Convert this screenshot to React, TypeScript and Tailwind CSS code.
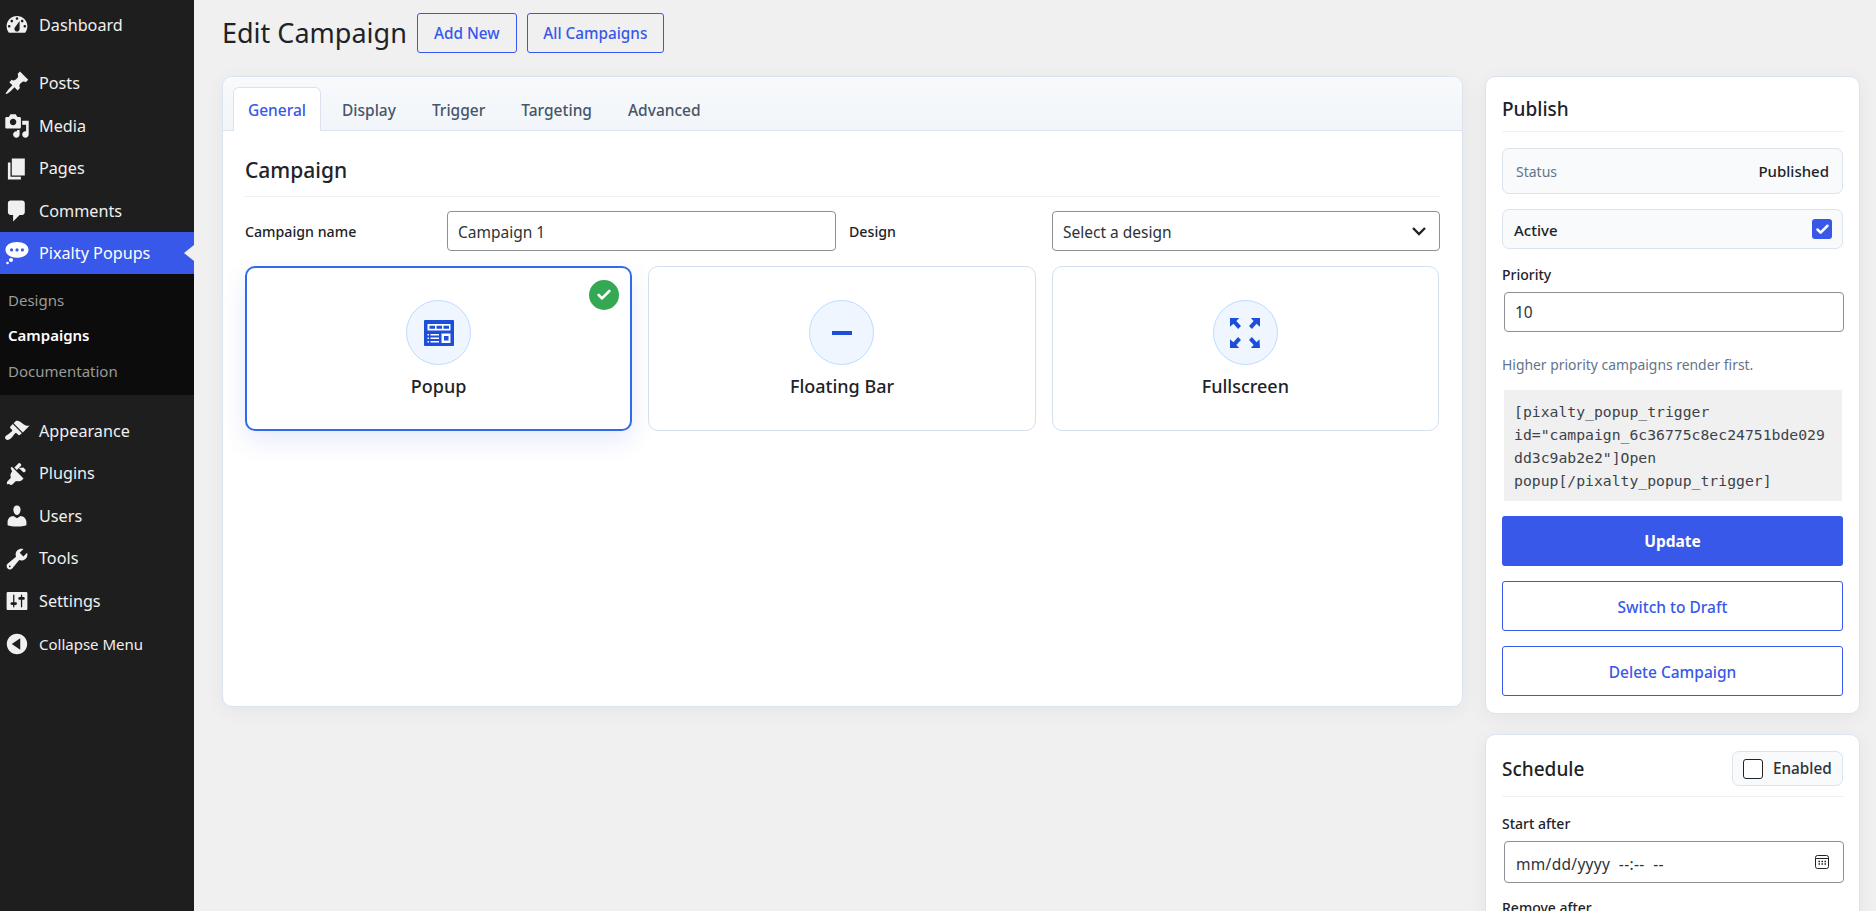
import { Check } from "lucide-react";
import type { ReactNode } from "react";

const ui = "font-['Noto_Sans',sans-serif]";

const Dash = ({ d, className = "" }: { d: string; className?: string }) => (
    <svg viewBox="0 0 20 20" className={`w-[26px] h-[26px] fill-current ${className}`}>
        <path fillRule="evenodd" d={d} />
    </svg>
);

const icons = {
    dashboard:
        "M3.76 16h12.48c1.1-1.37 1.76-3.11 1.76-5 0-4.42-3.58-8-8-8s-8 3.58-8 8c0 1.89.66 3.63 1.76 5zM10 4c.55 0 1 .45 1 1s-.45 1-1 1-1-.45-1-1 .45-1 1-1zM6 6c.55 0 1 .45 1 1s-.45 1-1 1-1-.45-1-1 .45-1 1-1zm8 0c.55 0 1 .45 1 1s-.45 1-1 1-1-.45-1-1 .45-1 1-1zm-5.37 5.55L12 7v6c0 1.1-.9 2-2 2s-2-.9-2-2c0-.57.24-1.08.63-1.45zM4 10c.55 0 1 .45 1 1s-.45 1-1 1-1-.45-1-1 .45-1 1-1zm12 0c.55 0 1 .45 1 1s-.45 1-1 1-1-.45-1-1 .45-1 1-1z",
    posts: "M10.44 3.02l1.82-1.82 6.36 6.35-1.83 1.82c-1.05-.68-2.48-.57-3.41.36l-.75.75c-.92.93-1.04 2.35-.35 3.41l-1.83 1.82-2.41-2.41-2.8 2.79c-.42.42-3.38 2.71-3.8 2.29s1.86-3.39 2.28-3.81l2.79-2.79L4.1 9.36l1.83-1.82c1.05.69 2.48.57 3.4-.36l.75-.75c.93-.92 1.05-2.35.36-3.41z",
    media: "M13 11V4c0-.55-.45-1-1-1h-1.67L9 1H5L3.67 3H2c-.55 0-1 .45-1 1v7c0 .55.45 1 1 1h10c.55 0 1-.45 1-1zM7 4.5c1.38 0 2.5 1.12 2.5 2.5S8.38 9.5 7 9.5 4.5 8.38 4.5 7 5.62 4.5 7 4.5zM14 6h5v10.5c0 1.38-1.12 2.5-2.5 2.5S14 17.88 14 16.5s1.12-2.5 2.5-2.5c.17 0 .34.02.5.05V9h-3V6zm-4 8.05V13h2v3.5c0 1.38-1.12 2.5-2.5 2.5S7 17.88 7 16.5 8.12 14 9.5 14c.17 0 .34.02.5.05z",
    pages: "M6 15V2h10v13H6zm-1 1h8v2H3V5h2v11z",
    comments:
        "M5 2h9c1.1 0 2 .9 2 2v7c0 1.1-.9 2-2 2h-2l-5 5v-5H5c-1.1 0-2-.9-2-2V4c0-1.1.9-2 2-2z",
    appearance:
        "M14.48 11.06L7.41 3.99l1.5-1.5c.5-.56 2.3-.47 3.51.32 1.21.8 1.43 1.28 2.91 2.1 1.18.64 2.45 1.26 4.45.85zm-.71.71L6.7 4.7 4.93 6.47c-.39.39-.39 1.02 0 1.41l1.06 1.06c.39.39.39 1.03 0 1.42-.6.6-1.43 1.11-2.21 1.69-.35.26-.7.53-1.01.84C1.43 13.23 0 15 1.41 16.41s3.14-.02 4.49-1.36c.31-.31.58-.66.84-1.01.59-.78 1.1-1.61 1.7-2.21.39-.39 1.02-.39 1.41 0l1.06 1.06c.39.39 1.02.39 1.41 0z",
    plugins:
        "M13.11 4.36L9.87 7.6 8 5.73l3.24-3.24c.35-.34 1.05-.2 1.56.32.52.51.66 1.21.31 1.55zm-8 1.77l.91-.91 9.01 9.01-.91.91c-1.37 1.37-3.24 1.62-4.94.93l-2.96 2.96-1.31.2-.78-.78-1.97.2.2-1.97 2.96-2.96c-.69-1.7-.44-3.57.93-4.94zm9.82-.3l1.62 1.62c.34.35.2 1.05-.31 1.56-.52.52-1.22.66-1.56.31l-3.24-3.24 3.49-.25z",
    users: "M10 9.25c-2.27 0-2.73-3.44-2.73-3.44C7 4.02 7.82 2 9.97 2c2.16 0 2.98 2.02 2.71 3.81 0 0-.41 3.44-2.68 3.44zm0 2.57L12.72 10c2.39 0 4.52 2.33 4.52 4.53v2.49s-3.65 1.13-7.24 1.13c-3.65 0-7.24-1.13-7.24-1.13v-2.49c0-2.25 1.94-4.48 4.47-4.48z",
    tools: "M16.68 9.77c-1.34 1.34-3.3 1.67-4.95.99l-5.41 6.52c-.99.99-2.59.99-3.57 0-.99-.98-.99-2.58 0-3.57l6.52-5.42c-.68-1.65-.35-3.61.99-4.95 1.28-1.28 3.12-1.62 4.72-1.06l-2.89 2.89 2.82 2.82 2.86-2.87c.53 1.58.18 3.41-1.09 4.67zM4.93 16.15c.27-.27.27-.71 0-.98-.27-.27-.71-.27-.98 0-.27.27-.27.71 0 .98.27.27.71.27.98 0z",
    settings:
        "M18 16V4c0-.55-.45-1-1-1H3c-.55 0-1 .45-1 1v12c0 .55.45 1 1 1h14c.55 0 1-.45 1-1zM8 11h1c.55 0 1 .45 1 1s-.45 1-1 1H8v1.5c0 .28-.22.5-.5.5s-.5-.22-.5-.5V13H6c-.55 0-1-.45-1-1s.45-1 1-1h1V5.5c0-.28.22-.5.5-.5s.5.22.5.5V11zm5-2h-1c-.55 0-1-.45-1-1s.45-1 1-1h1V5.5c0-.28.22-.5.5-.5s.5.22.5.5V7h1c.55 0 1 .45 1 1s-.45 1-1 1h-1v5.5c0 .28-.22.5-.5.5s-.5-.22-.5-.5V9z",
    collapse:
        "M10 2.16c4.33 0 7.84 3.51 7.84 7.84s-3.51 7.84-7.84 7.84S2.16 14.33 2.16 10 5.67 2.16 10 2.16zM12.5 14.5v-9L6 10z",
};

const MenuItem = ({ icon, label }: { icon: string; label: string }) => (
    <div className="flex items-center h-[42.6px] text-[#f0f0f0]">
        <Dash d={icon} className="ml-[4px] mr-[9px] shrink-0" />
        <span className="text-[16.2px]">{label}</span>
    </div>
);

const BubbleIcon = () => (
    <svg viewBox="0 0 24 24" className="w-6 h-6 ml-[5px] mr-[10px] shrink-0">
        <path
            fill="#fff"
            fillRule="evenodd"
            d="M12 1c6.4 0 11.5 2.9 11.5 7.8S18.4 16.8 12 16.8 .5 13.7 .5 8.8 5.6 1 12 1zM6.6 7.3a1.6 1.6 0 1 0 0 3.2 1.6 1.6 0 0 0 0-3.2zm5.4 0a1.6 1.6 0 1 0 0 3.2 1.6 1.6 0 0 0 0-3.2zm5.4 0a1.6 1.6 0 1 0 0 3.2 1.6 1.6 0 0 0 0-3.2z"
        />
        <circle cx="6" cy="19" r="2" fill="#fff" />
        <circle cx="2.5" cy="22" r="1.3" fill="#fff" />
    </svg>
);

const Sidebar = () => (
    <aside className="w-[194px] shrink-0 bg-[#1e1e1e] pt-[4px]">
        <MenuItem icon={icons.dashboard} label="Dashboard" />
        <div className="h-[15.5px]" />
        <MenuItem icon={icons.posts} label="Posts" />
        <MenuItem icon={icons.media} label="Media" />
        <MenuItem icon={icons.pages} label="Pages" />
        <MenuItem icon={icons.comments} label="Comments" />
        <div className="relative flex items-center h-[42px] bg-[#3858e9] text-white">
            <BubbleIcon />
            <span className="text-[16.2px]">Pixalty Popups</span>
            <span className="absolute right-0 top-[13px] border-y-[8px] border-r-[10px] border-y-transparent border-r-[#f0f0f0]" />
        </div>
        <div className="bg-[#0c0c0c] h-[121px] pt-[8px] text-[15px]">
            <div className="h-[35.5px] flex items-center pl-[8px] text-[#9a9a9a]">Designs</div>
            <div className="h-[35.5px] flex items-center pl-[8px] text-white font-semibold">Campaigns</div>
            <div className="h-[35.5px] flex items-center pl-[8px] text-[#9a9a9a]">Documentation</div>
        </div>
        <div className="h-[14px]" />
        <MenuItem icon={icons.appearance} label="Appearance" />
        <MenuItem icon={icons.plugins} label="Plugins" />
        <MenuItem icon={icons.users} label="Users" />
        <MenuItem icon={icons.tools} label="Tools" />
        <MenuItem icon={icons.settings} label="Settings" />
        <div className="flex items-center h-[44px] text-[#f0f0f0]">
            <Dash d={icons.collapse} className="ml-[4px] mr-[9px] shrink-0" />
            <span className="text-[15px]">Collapse Menu</span>
        </div>
    </aside>
);

const HeaderButton = ({ children, className }: { children: ReactNode; className: string }) => (
    <button className={`h-10 rounded-[3px] border border-[#3858e9] bg-transparent text-[15.3px] font-medium text-[#3858e9] ${className}`}>
        {children}
    </button>
);

const PopupGlyph = () => (
    <svg viewBox="0 0 30 26" className="w-[30px] h-[26px]">
        <rect width="30" height="26" rx="1" fill="#1d4ed8" />
        <path fill="#fff" d="M3.5 4h23v6.5h-23zM17.5 13.5h9V23h-9z" />
        <path fill="#1d4ed8" d="M5.5 5.8H11v3H5.5zM12.5 5.8H18v3h-5.5zM19.5 5.8H25v3h-5.500zM20 16h4.500v4.500H20z" />
        <path fill="#fff" d="M3.5 14H5v1.500H3.500zM6.500 14H15v1.500H6.500zM3.500 17.500H5V19H3.500zM6.500 17.500H15V19H6.500zM3.500 21H5v1.500H3.500zM6.500 21H15v1.500H6.500z" />
    </svg>
);

const FullscreenGlyph = () => (
    <svg viewBox="2 2 26 26" className="w-[30px] h-[30px]" fill="#1d4ed8">
        <path d="M2 2h8l-2.500 2.500 4 4.500-2.500 2.500-4-4.500L2 9.500z" />
        <path d="M28 2h-8l2.500 2.500-4 4.500 2.500 2.500 4-4.500L28 9.500z" />
        <path d="M2 28h8l-2.500-2.500 4-4.500-2.500-2.500-4 4.500L2 20.500z" />
        <path d="M28 28h-8l2.500-2.500-4-4.500 2.500-2.500 4 4.500 2.500-2.500z" />
    </svg>
);

const TypeCard = ({
    label,
    selected,
    children,
}: {
    label: string;
    selected?: boolean;
    children: ReactNode;
}) => (
    <div
        className={`relative h-[165px] rounded-[10px] bg-white flex flex-col items-center ${
            selected
                ? "border-2 border-[#2f6bea] pt-[32px] shadow-[0_10px_24px_rgba(56,88,233,0.12)]"
                : "border border-[#d5e0ee] pt-[33px]"
        }`}
    >
        {selected && (
            <span className="absolute top-[12px] right-[11px] w-[30px] h-[30px] rounded-full bg-[#34a853] flex items-center justify-center text-white">
                <Check size={16} strokeWidth={4} />
            </span>
        )}
        <span className="w-[65px] h-[65px] rounded-full bg-[#eff6ff] border border-[#bfdbfe] flex items-center justify-center">
            {children}
        </span>
        <span className="mt-[9px] text-[18px] font-medium leading-[24px] text-[#1d2327]">{label}</span>
    </div>
);

const tabs = ["Display", "Trigger", "Targeting", "Advanced"];

const cardShadow = "shadow-[0_4px_20px_rgba(15,23,42,0.05)]";

const MainCard = () => (
    <section className={`h-[631px] rounded-[10px] border border-[#dbe3ee] bg-white overflow-hidden ${cardShadow}`}>
        <div className="h-[54px] flex items-end gap-[6px] pl-[10px] border-b border-[#dbe3ee] bg-gradient-to-b from-[#f8fafc] to-[#f1f5f9] text-[15.5px] font-medium text-[#475569]">
            <div className="h-[44px] w-[88px] -mb-px pt-[3px] rounded-t-[6px] border border-b-0 border-[#dbe3ee] bg-white text-[#3858e9] flex items-center justify-center">
                General
            </div>
            {tabs.map((tab) => (
                <div key={tab} className="h-[44px] pt-[5px] px-[15px] flex items-center">
                    {tab}
                </div>
            ))}
        </div>
        <div className="px-[22px]">
            <h2 className="mt-[23px] pb-[10px] text-[21px] font-medium leading-[32px] text-[#1d2327] border-b border-[#eef1f5]">
                Campaign
            </h2>
            <div className="mt-[14px] flex items-center text-[14.2px] font-medium text-[#1d2327]">
                <label className="w-[202px] pt-px shrink-0">Campaign name</label>
                <input
                    readOnly
                    value="Campaign 1"
                    className="w-[389px] h-10 px-[10px] pt-[2px] rounded-[4px] border border-[#8c8f94] bg-white text-[15.5px] font-normal text-[#2c3338]"
                />
                <label className="ml-[13px] w-[203px] pt-px shrink-0">Design</label>
                <div className="relative w-[388px]">
                    <select className="w-full h-10 px-[10px] pt-[3px] rounded-[4px] border border-[#8c8f94] bg-white text-[15.5px] font-normal text-[#2c3338] appearance-none">
                        <option>Select a design</option>
                    </select>
                    <svg viewBox="0 0 20 20" className="absolute right-[9px] top-[8px] w-6 h-6 fill-none stroke-[#1d2327] stroke-2 pointer-events-none">
                        <path d="M5 7.5l5 5 5-5" />
                    </svg>
                </div>
            </div>
            <div className="mt-[15px] mr-px grid grid-cols-3 gap-4">
                <TypeCard label="Popup" selected>
                    <PopupGlyph />
                </TypeCard>
                <TypeCard label="Floating Bar">
                    <span className="block w-[20px] h-[4px] bg-[#1d4ed8]" />
                </TypeCard>
                <TypeCard label="Fullscreen">
                    <FullscreenGlyph />
                </TypeCard>
            </div>
        </div>
    </section>
);

const SideCheck = () => (
    <span className="w-5 h-5 rounded-[3px] bg-[#3858e9] flex items-center justify-center text-white">
        <Check size={15} strokeWidth={4} />
    </span>
);

const Sidebox = () => (
    <div className="w-[375px] shrink-0 flex flex-col gap-[20px]">
        <section className={`rounded-[10px] border border-[#dbe3ee] bg-white px-4 pt-[16px] pb-[16px] h-[638px] ${cardShadow}`}>
            <h2 className="text-[19px] font-medium leading-[32px] pb-[6px] border-b border-[#eef1f5] text-[#1d2327]">Publish</h2>
            <div className="mt-[16px] h-[46px] rounded-[7px] border border-[#dbe3ee] bg-[#f8fafc] px-[13px] flex items-center justify-between">
                <span className="text-[14px] text-[#64748b]">Status</span>
                <span className="pt-px text-[15px] font-medium text-[#1d2327]">Published</span>
            </div>
            <div className="mt-[15px] h-[40px] rounded-[7px] border border-[#dbe3ee] bg-[#f8fafc] pl-[11px] pr-[10px] flex items-center justify-between">
                <span className="pt-[2px] text-[15px] font-medium text-[#1d2327]">Active</span>
                <SideCheck />
            </div>
            <div className="mt-[15px] text-[14px] font-medium leading-[22px] text-[#1d2327]">Priority</div>
            <input
                readOnly
                value="10"
                className="mt-[6px] ml-[2px] w-[340px] h-10 px-[10px] rounded-[4px] border border-[#8c8f94] bg-white text-[15.5px] text-[#2c3338]"
            />
            <p className="mt-[22px] text-[13.9px] leading-[22px] text-[#64748b]">Higher priority campaigns render first.</p>
            <pre className="mt-[14px] ml-[2px] w-[338px] h-[111px] bg-[#f0f0f0] px-[10px] pt-[10px] font-['DejaVu_Sans_Mono',monospace] text-[14.75px] leading-[23px] text-[#3c434a] whitespace-pre">
                {'[pixalty_popup_trigger\nid="campaign_6c36775c8ec24751bde029\ndd3c9ab2e2"]Open\npopup[/pixalty_popup_trigger]'}
            </pre>
            <button className="mt-[15px] w-full h-[50px] pt-[2px] rounded-[3px] bg-[#3858e9] text-white text-[15.5px] font-bold">Update</button>
            <button className="mt-[15px] w-full h-[50px] pt-[3px] rounded-[3px] border border-[#3858e9] bg-white text-[#3858e9] text-[15.5px] font-medium">Switch to Draft</button>
            <button className="mt-[15px] w-full h-[50px] pt-[3px] rounded-[3px] border border-[#3858e9] bg-white text-[#3858e9] text-[15.5px] font-medium">Delete Campaign</button>
        </section>
        <section className={`rounded-[10px] border border-[#dbe3ee] bg-white px-4 pt-[16px] pb-4 ${cardShadow}`}>
            <div className="flex items-center justify-between pb-[10px] border-b border-[#eef1f5]">
                <h2 className="pt-[2px] text-[19px] font-medium text-[#1d2327]">Schedule</h2>
                <div className="h-[35px] w-[111px] rounded-[7px] border border-[#dbe3ee] bg-[#f8fafc] flex items-center pl-[10px] gap-[10px]">
                    <span className="w-5 h-5 rounded-[3px] border border-[#1d2327] bg-white" />
                    <span className="text-[15.3px] font-medium text-[#2c3338]">Enabled</span>
                </div>
            </div>
            <div className="mt-[16px] text-[14px] font-medium leading-[22px] text-[#1d2327]">Start after</div>
            <div className="relative mt-[6px] ml-[2px] w-[340px]">
                <input
                    readOnly
                    value="mm/dd/yyyy  --:--  --"
                    className="w-full h-[42px] px-[11px] pt-[3px] rounded-[4px] border border-[#8c8f94] bg-white text-[15.5px] tracking-[0.3px] text-[#2c3338] whitespace-pre"
                />
                <svg viewBox="0 0 16 16" className="absolute right-[14px] top-[13px] w-[16px] h-[16px] fill-none stroke-[#1d2327]">
                    <rect x="1.5" y="1.5" width="13" height="13" rx="2" />
                    <path d="M1.5 4.500h13" />
                    <path d="M4.500 7.500H6M7.500 7.500H9M10.500 7.500H12M4.500 10H6M7.500 10H9M10.500 10H12" strokeWidth="1.4" />
                </svg>
            </div>
            <div className="mt-[14px] text-[14px] font-medium leading-[22px] text-[#1d2327]">Remove after</div>
        </section>
    </div>
);

export default function App() {
    return (
        <div className={`${ui} flex h-[911px] overflow-hidden bg-[#f0f0f0]`}>
            <Sidebar />
            <main className="flex-1 pl-[28px] pr-[18px]">
                <div className="flex items-center h-[76px] pb-[10px]">
                    <h1 className="text-[27px] text-[#1d2327] leading-[40px]">Edit Campaign</h1>
                    <HeaderButton className="ml-[10px] w-[100px]">Add New</HeaderButton>
                    <HeaderButton className="ml-[10px] w-[137px]">All Campaigns</HeaderButton>
                </div>
                <div className="flex items-start gap-[22px]">
                    <div className="flex-1 min-w-0">
                        <MainCard />
                    </div>
                    <Sidebox />
                </div>
            </main>
        </div>
    );
}
